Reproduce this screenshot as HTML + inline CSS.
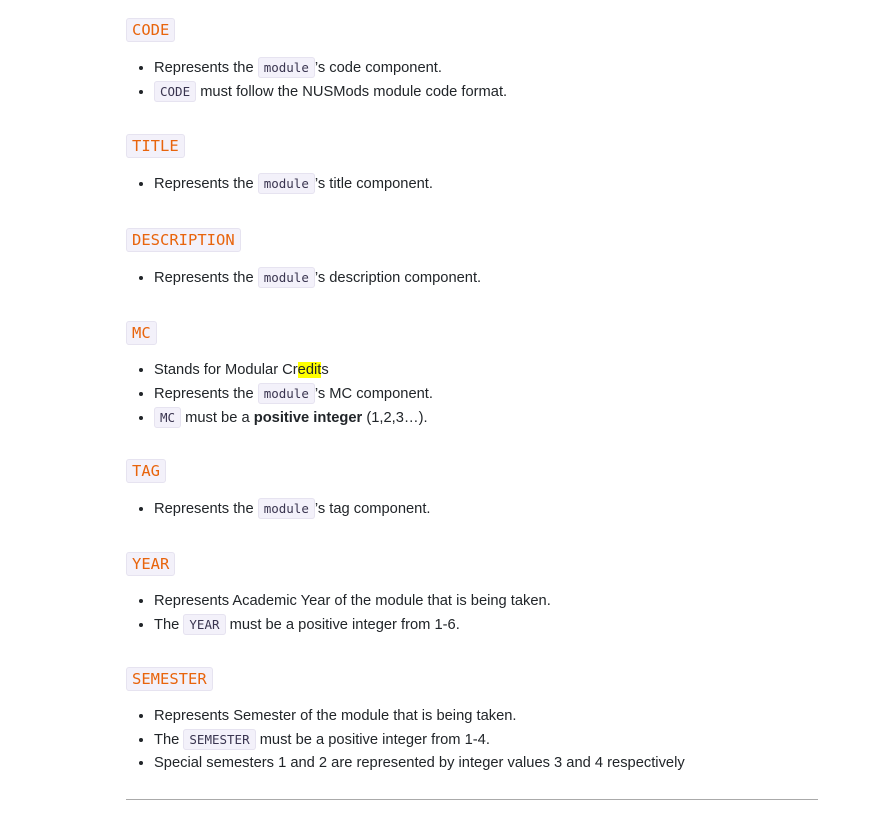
<!DOCTYPE html>
<html><head><meta charset="utf-8"><style>
body{margin:0;background:#fff;width:875px;height:814px;position:relative;overflow:hidden;font-family:"Liberation Sans",sans-serif;font-size:14.7px;color:#212529}
.s{position:absolute;left:126px;width:692px}
.h{position:absolute;left:0;top:0;height:22px;line-height:23px;padding:0 5px;background:#f3f1fa;border:1px solid #e6e3f0;border-radius:3px;font-family:"DejaVu Sans Mono","Liberation Mono",monospace;font-size:15.5px;color:#e8640c}
ul{position:absolute;top:38px;left:0;margin:0;padding:0 0 0 28px;line-height:23px;white-space:nowrap}
li{margin:0}
code{font-family:"DejaVu Sans Mono","Liberation Mono",monospace;font-size:12.5px;color:#3a3550;background:#f3f1fa;border:1px solid #e6e3f0;border-radius:3px;padding:2px 5px}
mark{background:#ffff00;color:inherit}
hr{position:absolute;left:126px;width:692px;top:799px;margin:0;border:0;border-top:1px solid #aaa}
</style></head><body>
<div class="s" style="top:18px"><span class="h">CODE</span><ul><li>Represents the <code>module</code>’s code component.</li><li><code>CODE</code> must follow the NUSMods module code format.</li></ul></div>
<div class="s" style="top:134px"><span class="h">TITLE</span><ul><li>Represents the <code>module</code>’s title component.</li></ul></div>
<div class="s" style="top:228px"><span class="h">DESCRIPTION</span><ul><li>Represents the <code>module</code>’s description component.</li></ul></div>
<div class="s" style="top:321px"><span class="h">MC</span><ul><li>Stands for Modular Cr<mark>edit</mark>s</li><li>Represents the <code>module</code>’s MC component.</li><li><code>MC</code> must be a <b>positive integer</b> (1,2,3…).</li></ul></div>
<div class="s" style="top:459px"><span class="h">TAG</span><ul><li>Represents the <code>module</code>’s tag component.</li></ul></div>
<div class="s" style="top:552px"><span class="h">YEAR</span><ul><li>Represents Academic Year of the module that is being taken.</li><li>The <code>YEAR</code> must be a positive integer from 1-6.</li></ul></div>
<div class="s" style="top:667px"><span class="h">SEMESTER</span><ul><li>Represents Semester of the module that is being taken.</li><li>The <code>SEMESTER</code> must be a positive integer from 1-4.</li><li>Special semesters 1 and 2 are represented by integer values 3 and 4 respectively</li></ul></div>
<hr>
</body></html>
